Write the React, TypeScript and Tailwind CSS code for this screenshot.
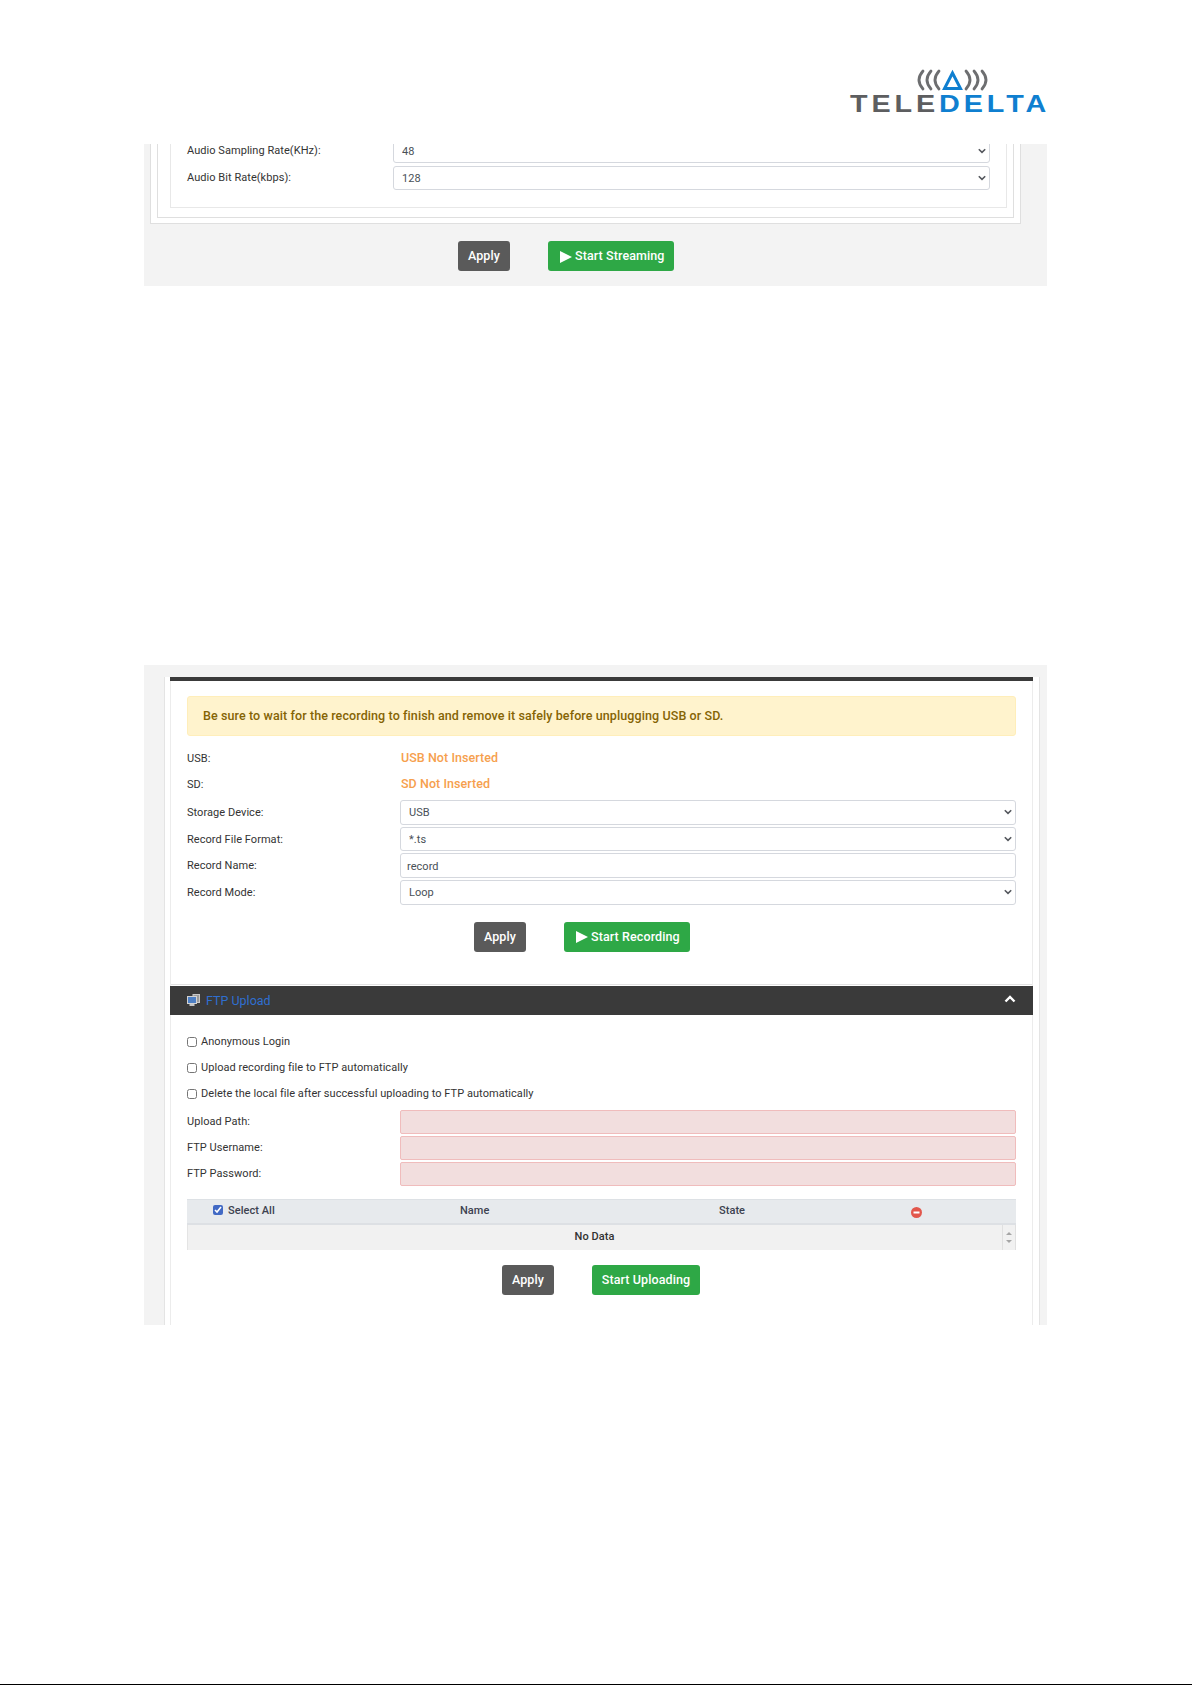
const font = { fontFamily: 'Roboto, "Noto Sans", sans-serif' }

function Logo() {
  return (
    <svg width="198" height="46" viewBox="0 0 198 46" className="block overflow-visible">
      <g fill="none" stroke="#6d6e70" strokeWidth="2.8" strokeLinecap="round">
        <path d="M73 2 Q65 11 73 20" />
        <path d="M81 2 Q73 11 81 20" />
        <path d="M89 2 Q81 11 89 20" />
        <path d="M116 2 Q124 11 116 20" />
        <path d="M124 2 Q132 11 124 20" />
        <path d="M132 2 Q140 11 132 20" />
      </g>
      <path d="M102.5 4 L94.5 19.5 H110.5 Z" fill="none" stroke="#0f7fd0" strokeWidth="3" />
      <text
        x="0"
        y="43.5"
        transform="scale(1.25,1)"
        fontFamily="Liberation Sans"
        fontWeight="700"
        fontSize="23"
        textLength="157"
        lengthAdjust="spacing"
      >
        <tspan fill="#5d5e60">TELE</tspan>
        <tspan fill="#0f7fd0">DELTA</tspan>
      </text>
    </svg>
  )
}

function Play() {
  return (
    <svg width="12" height="12" viewBox="0 0 12 12" className="shrink-0">
      <path d="M0 0 L12 6 L0 12 Z" fill="#fff" />
    </svg>
  )
}

function Btn({ green, children }: { green?: boolean; children: React.ReactNode }) {
  return (
    <button
      className={
        green
          ? 'h-[30px] pt-[1px] rounded-[3px] bg-[#2ea846] text-white text-[12.5px] font-medium tracking-[0.1px] flex items-center justify-center'
          : 'h-[30px] pt-[1px] w-[52px] rounded-[3px] bg-[#5a5a5a] text-white text-[12.5px] font-medium tracking-[0.1px] flex items-center justify-center'
      }
    >
      {children}
    </button>
  )
}

function Sel({ value, className }: { value: string; className: string }) {
  return (
    <div className={'relative ' + className}>
      <select
        defaultValue={value}
        className="block w-full h-full appearance-none bg-white border border-[#d5d8de] rounded-[3px] text-[11px] tracking-[0.05px] text-[#495057] pl-[8px] pt-[2px]"
      >
        <option>{value}</option>
      </select>
      <svg width="8" height="6" viewBox="0 0 8 6" className="absolute right-[4px] top-1/2 -translate-y-1/2 pointer-events-none">
        <path d="M0.8 1.2 L4 4.4 L7.2 1.2" fill="none" stroke="#55585e" strokeWidth="1.6" />
      </svg>
    </div>
  )
}

function FormRow({ label, children }: { label: string; children: React.ReactNode }) {
  return (
    <div className="flex items-center h-[24.67px]">
      <label className="w-[213px] pt-[2px] text-[11px] tracking-[0.05px] text-[#333]">{label}</label>
      {children}
    </div>
  )
}

function Check({ label }: { label: string }) {
  return (
    <label className="flex items-center h-[26px] gap-[4px] text-[11px] tracking-[0.05px] text-[#333]">
      <input type="checkbox" className="w-[10px] h-[10px] m-0" />
      <span className="pt-[2px]">{label}</span>
    </label>
  )
}

function PinkRow({ label }: { label: string }) {
  return (
    <div className="flex items-center h-[24px]">
      <label className="w-[213px] pt-[2px] text-[11px] tracking-[0.05px] text-[#333]">{label}</label>
      <input className="w-[616px] h-[24px] bg-[#f2dede] border border-[#f0bcbc] rounded-[2px]" />
    </div>
  )
}

export default function App() {
  return (
    <div className="h-[1685px] bg-white border-b border-black overflow-hidden" style={font}>
      {/* logo */}
      <div className="h-[144px] pt-[69px] pl-[850px]">
        <Logo />
      </div>

      {/* streaming panel */}
      <div className="mx-[144px] w-[903px] h-[142px] bg-[#f3f3f3] overflow-hidden pl-[6px]">
        <div className="w-[871px] h-[80px] bg-white border-x border-b border-[#dfdfdf] px-[6px] pb-[5px]">
          <div className="h-[74px] border-x border-b border-[#dfdfdf] pl-[12px] pr-[6px] pb-[9px]">
            <div className="h-[64px] border-x border-b border-[#e8e8e8] pl-[16px] pr-[15px] overflow-hidden">
              <div className="flex flex-col gap-[3px] -mt-[5px]">
                <div className="flex items-center">
                  <label className="w-[206px] shrink-0 text-[11px] tracking-[0.05px] text-[#333]">Audio Sampling Rate(KHz):</label>
                  <Sel value="48" className="w-[597px] h-[24px]" />
                </div>
                <div className="flex items-center">
                  <label className="w-[206px] shrink-0 text-[11px] tracking-[0.05px] text-[#333]">Audio Bit Rate(kbps):</label>
                  <Sel value="128" className="w-[597px] h-[24px]" />
                </div>
              </div>
            </div>
          </div>
        </div>
        <div className="flex mt-[17px] pl-[308px] gap-[38px]">
          <Btn>Apply</Btn>
          <Btn green>
            <span className="w-[126px] flex items-center pl-[12px] gap-[3px]">
              <Play />
              Start Streaming
            </span>
          </Btn>
        </div>
      </div>

      {/* recording / ftp panel */}
      <div className="mx-[144px] w-[903px] mt-[379px] h-[660px] bg-[#f3f3f3] pt-[12px] pl-[20px] pr-[7px]">
        <div className="h-[648px] bg-white border-x border-[#e4e4e4] pl-[5px] pr-[6px]">
          <div className="h-[648px] border-x border-[#ececec]">
            <div className="h-[4px] bg-[#3a3a3a] -mx-px" />
            <div className="px-[16px]">
              <div className="mt-[15px] h-[40px] bg-[#fff3cd] border border-[#ffeeba] rounded-[3px] pl-[15px] flex items-center text-[12.5px] font-medium tracking-[0.1px] text-[#856404]">
                Be sure to wait for the recording to finish and remove it safely before unplugging USB or SD.
              </div>

              <div className="mt-[10px] flex items-center h-[26px]">
                <span className="w-[214px] text-[11px] tracking-[0.05px] text-[#333]">USB:</span>
                <span className="-mt-[1px] text-[12.5px] font-medium tracking-[0.05px] text-[#f6a04d]">USB Not Inserted</span>
              </div>
              <div className="flex items-center h-[26px]">
                <span className="w-[214px] text-[11px] tracking-[0.05px] text-[#333]">SD:</span>
                <span className="-mt-[1px] text-[12.5px] font-medium tracking-[0.05px] text-[#f6a04d]">SD Not Inserted</span>
              </div>

              <div className="mt-[2px] flex flex-col gap-[2px]">
                <FormRow label="Storage Device:">
                  <Sel value="USB" className="w-[616px] h-full" />
                </FormRow>
                <FormRow label="Record File Format:">
                  <Sel value="*.ts" className="w-[616px] h-full" />
                </FormRow>
                <FormRow label="Record Name:">
                  <input
                    defaultValue="record"
                    className="w-[616px] h-full bg-white border border-[#d5d8de] rounded-[3px] text-[11px] tracking-[0.05px] text-[#495057] pl-[6px] pt-[2px]"
                  />
                </FormRow>
                <FormRow label="Record Mode:">
                  <Sel value="Loop" className="w-[616px] h-full" />
                </FormRow>
              </div>

              <div className="flex mt-[17px] pl-[287px] gap-[38px]">
                <Btn>Apply</Btn>
                <Btn green>
                  <span className="w-[126px] flex items-center pl-[12px] gap-[3px]">
                    <Play />
                    Start Recording
                  </span>
                </Btn>
              </div>
            </div>

            {/* ftp header */}
            <div className="mt-[32px] h-px bg-[#e2e2e2]" />
            <div className="mt-px h-[29px] bg-[#3a3a3a] -mx-px flex items-center pl-[17px] pr-[17px]">
              <svg width="13" height="13" viewBox="0 0 13 13" className="shrink-0">
                <rect x="6" y="0.5" width="6.5" height="8" fill="#9a9a9a" stroke="#c8c8c8" />
                <rect x="0.5" y="2.5" width="9" height="7" fill="#4d7fc4" stroke="#d2d2d2" />
                <rect x="2.5" y="10" width="5" height="2" fill="#c4c4c4" />
              </svg>
              <span className="ml-[6px] pt-[2px] text-[12.5px] text-[#2f6fd0]">FTP Upload</span>
              <svg width="12" height="8" viewBox="0 0 12 8" className="ml-auto -mt-[2px]">
                <path d="M1.5 6.5 L6 2 L10.5 6.5" fill="none" stroke="#fff" strokeWidth="2.4" />
              </svg>
            </div>

            <div className="px-[16px]">
              <div className="mt-[14px]">
                <Check label="Anonymous Login" />
                <Check label="Upload recording file to FTP automatically" />
                <Check label="Delete the local file after successful uploading to FTP automatically" />
              </div>
              <div className="mt-[3px] flex flex-col gap-[2px]">
                <PinkRow label="Upload Path:" />
                <PinkRow label="FTP Username:" />
                <PinkRow label="FTP Password:" />
              </div>

              {/* file table */}
              <div className="mt-[13px] text-[11px] tracking-[0.05px] font-medium text-[#3d4250]">
                <div className="h-[26px] bg-[#e7eaed] border-t border-[#dde1e5] border-b-2 border-b-[#dde0e4] flex items-center">
                  <div className="w-[273px] pl-[26px] flex items-center gap-[5px]">
                    <input type="checkbox" defaultChecked className="w-[10px] h-[10px] m-0 -mt-[2px] accent-[#4169c4]" />
                    Select All
                  </div>
                  <div className="w-[259px]">Name</div>
                  <div className="w-[192px]">State</div>
                  <svg width="11" height="11" viewBox="0 0 11 11" className="mt-[2px]">
                    <circle cx="5.5" cy="5.5" r="5.5" fill="#e2574c" />
                    <rect x="2.5" y="4.5" width="6" height="2" fill="#fff" />
                  </svg>
                </div>
                <div className="h-[25px] bg-[#f1f1f1] border-l border-[#e4e4e4] flex items-center">
                  <div className="w-[813px] text-center text-[#333]">No Data</div>
                  <div className="ml-auto w-[14px] h-full border-l border-r border-[#e0e0e0] flex flex-col items-center justify-center gap-[5px]">
                    <div className="w-0 h-0 border-x-[3px] border-x-transparent border-b-[3px] border-b-[#a5a5a5]" />
                    <div className="w-0 h-0 border-x-[3px] border-x-transparent border-t-[3px] border-t-[#a5a5a5]" />
                  </div>
                </div>
              </div>

              <div className="flex mt-[15px] pl-[315px] gap-[38px]">
                <Btn>Apply</Btn>
                <Btn green>
                  <span className="w-[108px] text-center">Start Uploading</span>
                </Btn>
              </div>
            </div>
          </div>
        </div>
      </div>
    </div>
  )
}
